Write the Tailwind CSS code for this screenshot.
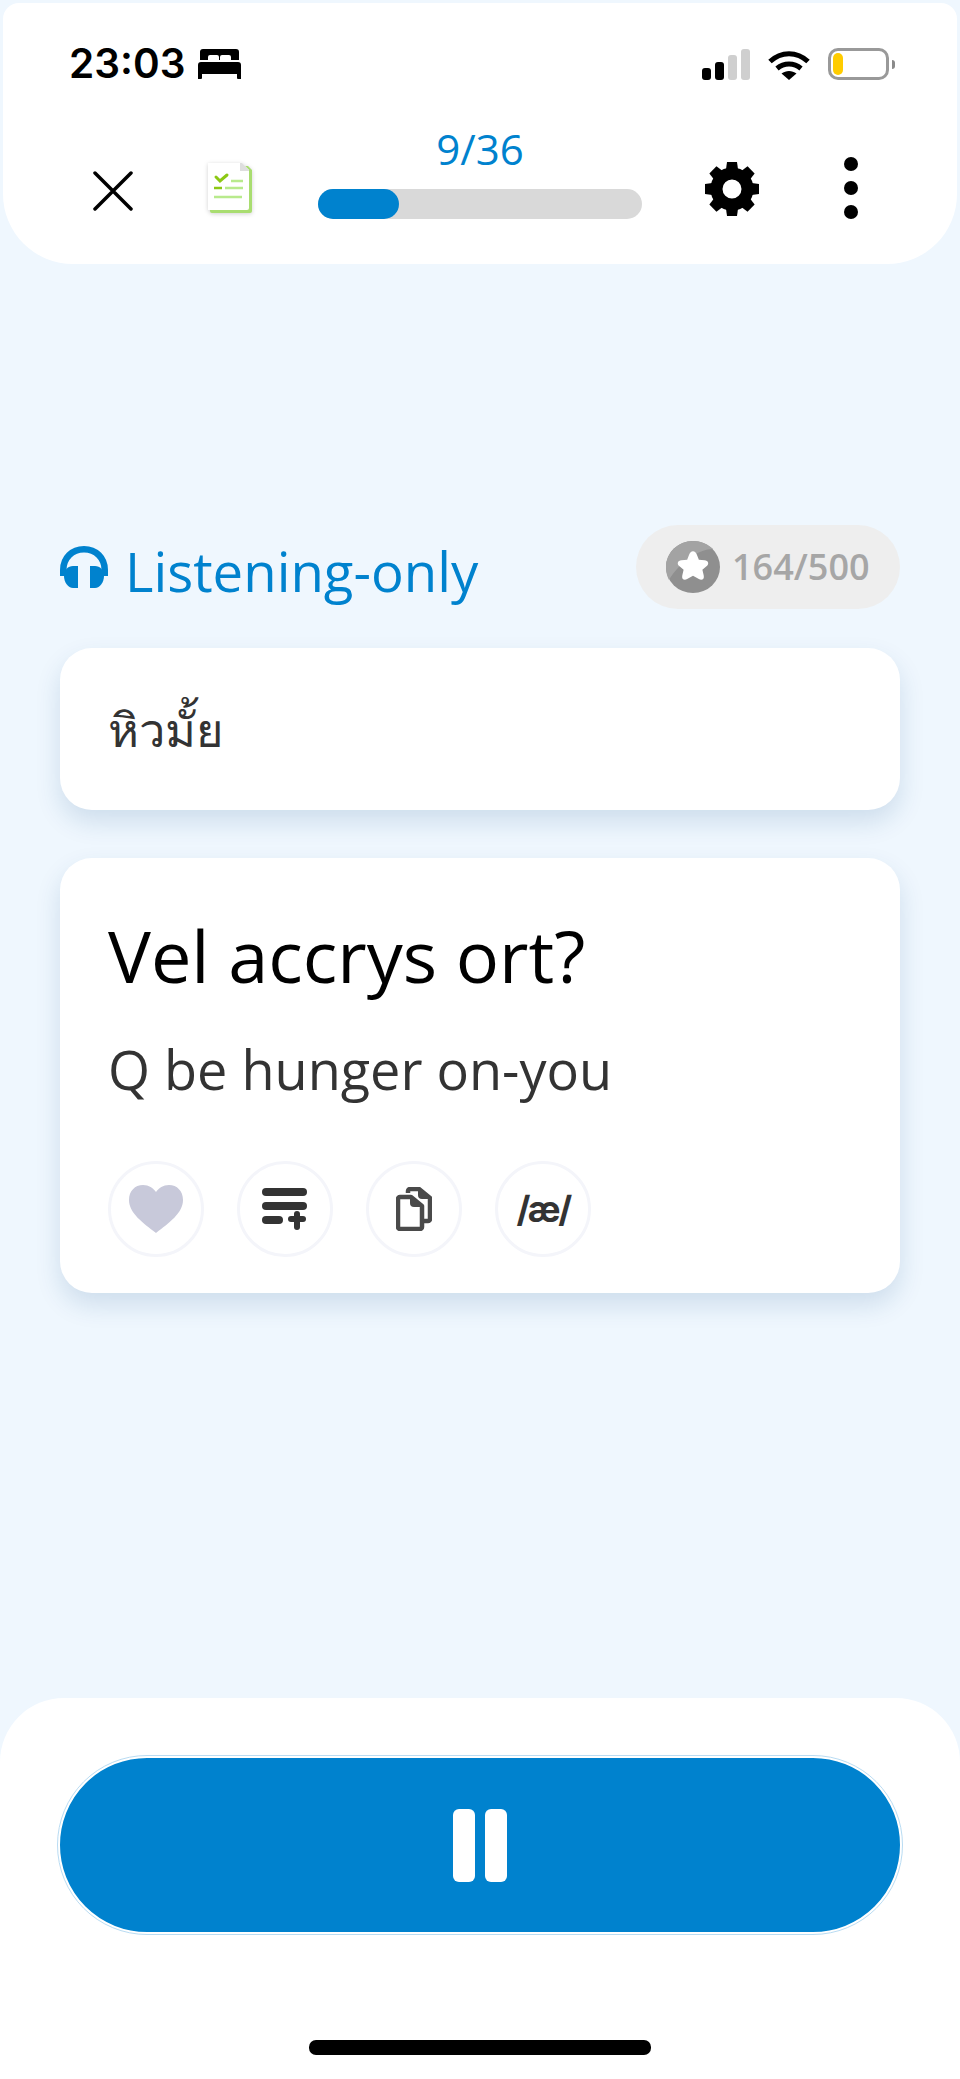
<!DOCTYPE html>
<html lang="en">
<head>
    <meta charset="UTF-8">
    <meta name="viewport" content="width=device-width, initial-scale=1.0">
    <title>Listening-only</title>
    <script src="https://cdn.jsdelivr.net/npm/@tailwindcss/browser@4"></script>
</head>
<body class="bg-[#eff7fe] font-['Open_Sans','Noto_Sans',sans-serif]">
<div class="h-[2079px] w-[960px] flex flex-col overflow-hidden">

    <!-- Header -->
    <header class="mx-[3px] mt-[3px] h-[261px] bg-white rounded-t-[16px] rounded-b-[70px] shrink-0 pt-[45px]">
        <!-- Status bar -->
        <div class="flex items-center justify-between h-[32px] pl-[66px] pr-[62px]">
            <div class="flex items-center gap-[13px]">
                <span class="font-['Inter',sans-serif] font-semibold text-[40.500px] leading-none text-black">23:03</span>
                <svg width="43" height="30" viewBox="0 0 43 30"><path fill="#000" d="M5 0h33a3 3 0 0 1 3 3v8h-8V8a2 2 0 0 0-2-2h-7a2 2 0 0 0-2 2v3h-1V8a2 2 0 0 0-2-2H12a2 2 0 0 0-2 2v3H2V3a3 3 0 0 1 3-3zM3 13h37a3 3 0 0 1 3 3v14h-3a1 1 0 0 1-1-1v-4H4v4a1 1 0 0 1-1 1H0V16a3 3 0 0 1 3-3z"/></svg>
            </div>
            <div class="flex items-center">
                <div class="flex items-end gap-[4px] h-[31px]">
                    <div class="w-[9px] h-[12px] rounded-[3px] bg-black"></div>
                    <div class="w-[9px] h-[18px] rounded-[3px] bg-black"></div>
                    <div class="w-[9px] h-[25px] rounded-[3px] bg-[#cfcfcf]"></div>
                    <div class="w-[9px] h-[31px] rounded-[3px] bg-[#cfcfcf]"></div>
                </div>
                <svg class="ml-[18px]" width="42" height="31" viewBox="0 0 42 31"><path fill="none" stroke="#000" stroke-width="5" d="M2 12.500C13 2 29 2 40 12.500"/><path fill="none" stroke="#000" stroke-width="5" d="M9 19.500c7-6 17-6 24 0"/><path fill="#000" d="M13.500 24.500c4.500-3.500 10.500-3.500 15 0L21 31z"/></svg>
                <div class="ml-[18px] w-[61px] h-[32px] rounded-[10px] border-[3px] border-[#999] p-[2px] bg-white">
                    <div class="w-[10px] h-full rounded-[5px] bg-[#ffcc00]"></div>
                </div>
                <div class="ml-[3px] w-[3px] h-[9px] rounded-r-[3px] bg-[#8a8a8a]"></div>
            </div>
        </div>

        <!-- Toolbar -->
        <div class="mt-[47px] flex items-start pl-[90px]">
            <svg width="40" height="40" viewBox="0 0 40 40" class="shrink-0 mt-[44px]"><path d="M2 2l36 36M38 2L2 38" stroke="#000" stroke-width="3.500" stroke-linecap="round"/></svg>
            <svg width="46" height="50" viewBox="0 0 46 50" class="shrink-0 ml-[74px] mt-[36px] drop-shadow-[0_1px_2px_rgba(0,0,0,0.18)]">
                <path d="M3 3h38l4 4v41a2 2 0 0 1-2 2H5a2 2 0 0 1-2-2z" fill="#a9dd70"/>
                <path d="M1 0h34l7 7v38a2 2 0 0 1-2 2H1z" fill="#fff"/>
                <path d="M33 0h2l7 7v1h-9z" fill="#dedede"/>
                <path d="M9 14l4 4 7-6" fill="none" stroke="#8cc814" stroke-width="3" stroke-linecap="round"/>
                <path d="M24 18h12M18 25h18M7 34h28" stroke="#b8ea8c" stroke-width="2.500"/>
                <path d="M7 25h8" stroke="#8cc814" stroke-width="2.500"/>
            </svg>
            <div class="ml-[65px] w-[324px] shrink-0">
                <div class="text-center text-[#0082ce] text-[42px] leading-[44px] mb-[18px]">9/36</div>
                <div class="h-[30px] rounded-full bg-[#d9d9d9]">
                    <div class="h-full w-[81px] rounded-full bg-[#0082ce]"></div>
                </div>
            </div>
            <svg width="54" height="54" viewBox="0 0 54 54" class="shrink-0 ml-[63px] mt-[35px]">
                <circle cx="27" cy="27" r="15.500" fill="none" stroke="#000" stroke-width="12"/>
                <g fill="#000">
                    <path d="M22 0h10l1.500 11h-13z"/>
                    <path d="M22 0h10l1.500 11h-13z" transform="rotate(45 27 27)"/>
                    <path d="M22 0h10l1.500 11h-13z" transform="rotate(90 27 27)"/>
                    <path d="M22 0h10l1.500 11h-13z" transform="rotate(135 27 27)"/>
                    <path d="M22 0h10l1.500 11h-13z" transform="rotate(180 27 27)"/>
                    <path d="M22 0h10l1.500 11h-13z" transform="rotate(225 27 27)"/>
                    <path d="M22 0h10l1.500 11h-13z" transform="rotate(270 27 27)"/>
                    <path d="M22 0h10l1.500 11h-13z" transform="rotate(315 27 27)"/>
                </g>
            </svg>
            <div class="ml-[85px] mt-[30px] flex flex-col gap-[10px] shrink-0">
                <div class="w-[14px] h-[14px] rounded-full bg-black"></div>
                <div class="w-[14px] h-[14px] rounded-full bg-black"></div>
                <div class="w-[14px] h-[14px] rounded-full bg-black"></div>
            </div>
        </div>
    </header>

    <!-- Content -->
    <main class="px-[60px] pt-[261px]">
        <div class="flex items-center justify-between h-[84px]">
            <div class="flex items-center gap-[17px]">
                <svg width="48" height="42" viewBox="0 0 48 42"><path fill="none" stroke="#0082ce" stroke-width="6.500" d="M3.250 30V24C3.250 12 12 3.250 24 3.250S44.750 12 44.750 24v6"/><path fill="#0082ce" d="M18 20v22h-5C8 42 4 36 4 30s4-10 9-10z"/><path fill="#0082ce" d="M30 20v22h5c5 0 9-6 9-12s-4-10-9-10z"/></svg>
                <span class="text-[#0082ce] text-[54.500px] leading-none pt-[8px]">Listening-only</span>
            </div>
            <div class="w-[264px] h-[84px] rounded-full bg-[#eeeeee] flex items-center pl-[30px] gap-[12px]">
                <svg width="54" height="52" viewBox="0 0 54 52"><ellipse cx="27" cy="26" rx="27" ry="26" fill="#8f8f8f"/><path d="M27 0C12 0 0 12 0 26c0 5 1 9 3 13C10 26 30 8 47 8 42 3 35 0 27 0z" fill="#a3a3a3"/><path transform="translate(27 26) scale(1.22) translate(-27 -24)" d="M27 11c1.500 0 2.500 1 3.200 3l1.600 4 4.700.4c3 .3 4 2.800 1.800 4.800l-3.600 3.100 1.100 4.600c.7 2.900-1.500 4.500-4 3l-4.800-2.700-4.800 2.700c-2.500 1.500-4.700-.1-4-3l1.100-4.600-3.600-3.100c-2.200-2-1.200-4.500 1.800-4.800l4.700-.4 1.600-4c.7-2 1.700-3 3.200-3z" fill="#fff"/></svg>
                <span class="text-[36px] font-semibold text-[#a6a6a6] leading-none">164/500</span>
            </div>
        </div>

        <div class="mt-[39px] h-[162px] rounded-[32px] bg-white shadow-[0_12px_26px_rgba(0,70,130,0.14)] flex items-center pl-[48px]">
            <span class="text-[47px] font-medium text-[#333] leading-none">หิวมั้ย</span>
        </div>

        <div class="mt-[48px] h-[435px] rounded-[32px] bg-white shadow-[0_12px_26px_rgba(0,70,130,0.14)] pl-[48px] pt-[54px]">
            <div class="text-[72px] leading-[86px] text-black">Vel accrys ort?</div>
            <div class="text-[54px] leading-[72px] text-[#333] mt-[35px]">Q be hunger on-you</div>
            <div class="flex gap-[33px] mt-[56px]">
                <div class="w-[96px] h-[96px] rounded-full border-[3px] border-[#f4f5fa] flex items-center justify-center">
                    <svg width="54" height="48" viewBox="0 0 54 48"><path fill="#c8c9da" d="M27 48C14 38 0 28 0 15 0 6 6 0 14 0c6 0 10 3 13 7 3-4 7-7 13-7 8 0 14 6 14 15 0 13-14 23-27 33z"/></svg>
                </div>
                <div class="w-[96px] h-[96px] rounded-full border-[3px] border-[#f4f5fa] flex items-center justify-center">
                    <svg width="46" height="42" viewBox="0 0 46 42"><g fill="#333"><rect x="0" y="0" width="45" height="8" rx="4"/><rect x="0" y="14" width="45" height="8" rx="4"/><rect x="0" y="28" width="21" height="8" rx="4"/><rect x="26" y="28" width="18" height="6" rx="3"/><rect x="32" y="23" width="6" height="19" rx="3"/></g></svg>
                </div>
                <div class="w-[96px] h-[96px] rounded-full border-[3px] border-[#f4f5fa] flex items-center justify-center">
                    <svg width="36" height="44" viewBox="0 0 36 44"><path fill="none" stroke="#4a4a4a" stroke-width="4.500" stroke-linejoin="round" d="M12 6V4a2 2 0 0 1 2-2h9l11 9v21a2 2 0 0 1-2 2h-4"/><path fill="#4a4a4a" d="M22 1l13 11h-9a4 4 0 0 1-4-4z"/><path fill="none" stroke="#4a4a4a" stroke-width="4.500" stroke-linejoin="round" d="M2 12a2 2 0 0 1 2-2h11l11 9v21a2 2 0 0 1-2 2H4a2 2 0 0 1-2-2z"/><path fill="#4a4a4a" d="M14 9l13 11h-9a4 4 0 0 1-4-4z"/></svg>
                </div>
                <div class="w-[96px] h-[96px] rounded-full border-[3px] border-[#f4f5fa] flex items-center justify-center">
                    <span class="font-['Inter',sans-serif] font-bold text-[36px] leading-none text-[#333] tracking-[-2.500px]">/æ/</span>
                </div>
            </div>
        </div>
    </main>

    <!-- Footer -->
    <footer class="mt-auto h-[381px] bg-white rounded-t-[64px] shrink-0 px-[58px] pt-[58px] flex flex-col">
        <div class="h-[178px] rounded-full bg-[#0082ce] border-[2px] border-white outline-[1px] outline-[#b9dcf3] flex items-center justify-center gap-[10px]">
            <div class="w-[22px] h-[73px] rounded-[6px] bg-white"></div>
            <div class="w-[22px] h-[73px] rounded-[6px] bg-white"></div>
        </div>
        <div class="mt-[106px] self-center w-[342px] h-[15px] rounded-[7px] bg-black"></div>
    </footer>
</div>
</body>
</html>
